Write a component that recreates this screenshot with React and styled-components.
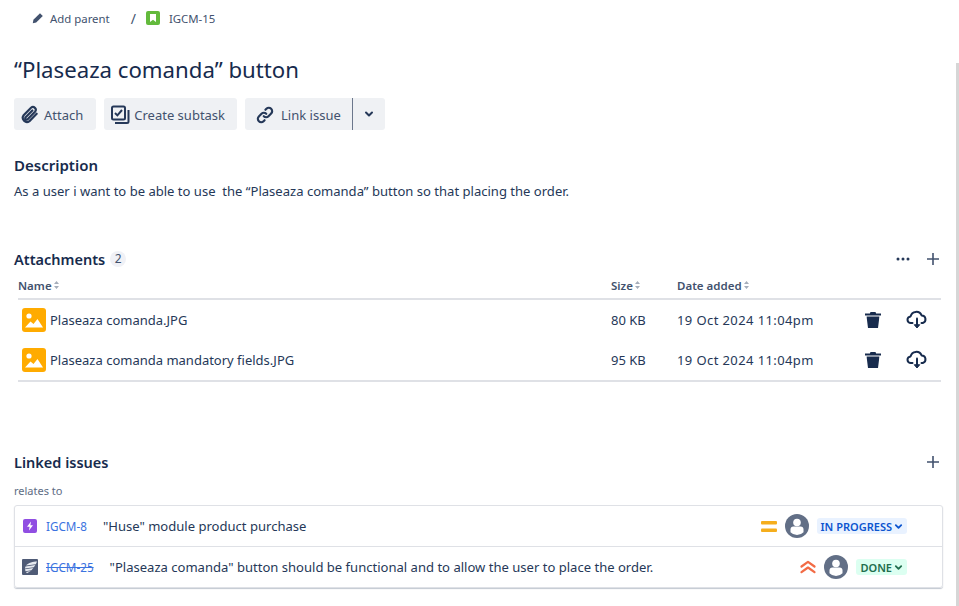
import React from 'react'
import styled, {createGlobalStyle} from 'styled-components'

const Global = createGlobalStyle`
  html, body { margin: 0; padding: 0; background: #fff; }
  body {
    font-family: "Noto Sans", "Open Sans", sans-serif;
    color: #253858;
    font-size: 13px;
  }
`

const PaperclipIcon = () => (
  <svg width="20" height="20" viewBox="0 0 24 24" fill="none" stroke="#253858" strokeWidth="2.600" strokeLinecap="round">
    <path d="M20 10.500l-8.600 8.800a5 5 0 0 1-7-7l8.800-9a3.400 3.400 0 0 1 4.800 4.800l-8.800 9a1.700 1.700 0 0 1-2.400-2.400l8-8.200" />
  </svg>
)

const SubtaskIcon = () => (
  <svg width="20" height="20" viewBox="0 0 20 20" fill="none" stroke="#253858" strokeWidth="2">
    <rect x="2" y="1.500" width="13" height="13" rx="1.500" />
    <path d="M5 8l2.400 2.400L12 5" />
    <path d="M18.500 5v11.500a1.500 1.500 0 0 1-1.500 1.500H5" />
  </svg>
)

const LinkIcon = () => (
  <svg width="20" height="20" viewBox="0 0 24 24" fill="none" stroke="#253858" strokeWidth="2.600" strokeLinecap="round">
    <path d="M10.500 13.500a4 4 0 0 0 5.700 0l3.200-3.200a4 4 0 0 0-5.700-5.700l-1.200 1.200" />
    <path d="M13.500 10.500a4 4 0 0 0-5.700 0l-3.200 3.200a4 4 0 0 0 5.700 5.700l1.200-1.200" />
  </svg>
)

const Chevron = ({color = '#253858', size = 10}) => (
  <svg width={size} height={size} viewBox="0 0 10 10" fill="none" stroke={color} strokeWidth="2" strokeLinecap="round" strokeLinejoin="round">
    <path d="M2 3.500l3 3 3-3" />
  </svg>
)

const PencilIcon = () => (
  <svg width="12" height="12" viewBox="0 0 12 12" fill="#42526e">
    <path d="M8 1.200l2.800 2.800-6.600 6.600L.8 11.200l.6-3.400z" />
  </svg>
)

const StoryIcon = () => (
  <svg width="14" height="14" viewBox="0 0 14 14">
    <rect width="14" height="14" rx="2" fill="#63ba3c" />
    <path d="M4 3h6v8L7 8.800 4 11z" fill="#fff" />
  </svg>
)

const SortIcon = () => (
  <svg width="5" height="8" viewBox="0 0 5 8" fill="#a5adba">
    <path d="M2.500 0L5 3H0zM2.500 8L0 5h5z" />
  </svg>
)

const ImageIcon = () => (
  <svg width="24" height="24" viewBox="0 0 24 24">
    <rect width="24" height="24" rx="3" fill="#ffab00" />
    <circle cx="7" cy="8" r="2.600" fill="#fff" />
    <path d="M3 19.500l5.500-6 3 2.500 4-5 5.500 8.500z" fill="#fff" />
  </svg>
)

const TrashIcon = () => (
  <svg width="16" height="16" viewBox="0 0 16 16" fill="#172b4d">
    <path d="M5.500 0h5l.6 1.400H16v2H0v-2h4.900z" />
    <path d="M1.600 4.500h12.800L13 16H3z" />
  </svg>
)

const CloudIcon = () => (
  <svg width="22" height="22" viewBox="0 0 22 22" fill="none" stroke="#172b4d" strokeWidth="2" strokeLinecap="round" strokeLinejoin="round">
    <path d="M6.500 14H5a3.300 3.300 0 0 1-.4-6.600 5.800 5.800 0 0 1 11-1 3.900 3.900 0 0 1 1.200 7.600H15.500" />
    <path d="M11 9.500v7" />
    <path d="M8.500 16l2.500 3 2.500-3z" fill="#172b4d" strokeWidth="1" />
  </svg>
)

const DotsIcon = () => (
  <svg width="14" height="4" viewBox="0 0 14 4" fill="#253858">
    <circle cx="2" cy="2" r="1.500" />
    <circle cx="7" cy="2" r="1.500" />
    <circle cx="12" cy="2" r="1.500" />
  </svg>
)

const PlusIcon = () => (
  <svg width="12" height="12" viewBox="0 0 12 12" stroke="#42526e" strokeWidth="1.600">
    <path d="M6 0v12M0 6h12" />
  </svg>
)

const EpicIcon = () => (
  <svg width="14" height="14" viewBox="0 0 14 14">
    <rect width="14" height="14" rx="2" fill="#904ee2" />
    <path d="M8 2.500L4 7.800h2.600L6 11.500l4-5.300H7.400z" fill="#fff" />
  </svg>
)

const WingIcon = () => (
  <svg width="16" height="16" viewBox="0 0 16 16">
    <rect width="16" height="16" rx="1" fill="#4f5b76" />
    <g fill="#e6e9ef">
      <path d="M15 2.500C11 2.700 6.500 3.500 4 6.500l9.800-1.300z" />
      <path d="M13.300 6L3.500 7.400 2.800 9.400 11.800 8.200z" />
      <path d="M11.300 9L3 10.200 3.500 12.300 9.400 11.300z" />
      <path d="M8.700 12L4 12.900 5 14.200z" />
    </g>
  </svg>
)

const MediumIcon = () => (
  <svg width="16" height="11" viewBox="0 0 16 11" fill="#f5ae1d">
    <rect width="16" height="3.500" rx="1" />
    <rect y="7.500" width="16" height="3.500" rx="1" />
  </svg>
)

const HighestIcon = () => (
  <svg width="16" height="14" viewBox="0 0 16 14" fill="none" stroke="#f26b45" strokeWidth="2.200" strokeLinecap="round" strokeLinejoin="round">
    <path d="M1.500 6.500L8 1.800l6.500 4.700" />
    <path d="M1.500 12.200L8 7.500l6.500 4.700" />
  </svg>
)

const AvatarIcon = () => (
  <svg width="24" height="24" viewBox="0 0 24 24">
    <circle cx="12" cy="12" r="12" fill="#626f86" />
    <circle cx="12" cy="8.500" r="3.800" fill="#fff" />
    <path d="M5.500 15.500a3 3 0 0 1 3-3h7a3 3 0 0 1 3 3v2.800a9 9 0 0 1-13 0z" fill="#fff" />
  </svg>
)

const attachments = [
  {name: 'Plaseaza comanda.JPG', size: '80 KB', date: '19 Oct 2024 11:04pm'},
  {name: 'Plaseaza comanda mandatory fields.JPG', size: '95 KB', date: '19 Oct 2024 11:04pm'},
]

const App = () => {
  return (
    <Page>
      <Global />
      <ScrollThumb />
      <Breadcrumbs>
        <ParentLink><PencilIcon />Add parent</ParentLink>
        <Slash>/</Slash>
        <StoryIcon />
        <IssueKey>IGCM-15</IssueKey>
      </Breadcrumbs>

      <Title>“Plaseaza comanda” button</Title>

      <Actions>
        <ActionButton $right={13}><PaperclipIcon />Attach</ActionButton>
        <ActionButton><SubtaskIcon />Create subtask</ActionButton>
        <SplitGroup>
          <SplitMain><LinkIcon />Link issue</SplitMain>
          <SplitArrow><Chevron /></SplitArrow>
        </SplitGroup>
      </Actions>

      <Heading>Description</Heading>
      <Paragraph>As a user i want to be able to use&nbsp; the “Plaseaza comanda” button so that placing the order.</Paragraph>

      <AttachmentsHeader>
        <HeadingRow>
          <SectionTitle>Attachments</SectionTitle>
          <Count>2</Count>
        </HeadingRow>
        <HeaderTools><DotsIcon /><PlusIcon /></HeaderTools>
      </AttachmentsHeader>

      <Table>
        <TableHead>
          <HeadCell>Name <SortIcon /></HeadCell>
          <HeadCell>Size <SortIcon /></HeadCell>
          <HeadCell>Date added <SortIcon /></HeadCell>
        </TableHead>
        {attachments.map((file) => (
          <TableRow key={file.name}>
            <NameCell><ImageIcon />{file.name}</NameCell>
            <div>{file.size}</div>
            <DateCell>{file.date}</DateCell>
            <IconCell><TrashIcon /></IconCell>
            <IconCell><CloudIcon /></IconCell>
          </TableRow>
        ))}
      </Table>

      <LinkedHeader>
        <SectionTitle>Linked issues</SectionTitle>
        <PlusIcon />
      </LinkedHeader>
      <RelatesTo>relates to</RelatesTo>

      <LinkedCard>
        <LinkedRow>
          <EpicIcon />
          <IssueLink $gap={9}>IGCM-8</IssueLink>
          <Summary>"Huse" module product purchase</Summary>
          <RowEnd>
            <MediumIcon />
            <AvatarIcon />
            <Status $bg="#e9f2ff" $color="#0c55cf">IN PROGRESS <Chevron color="#0c55cf" size={9} /></Status>
          </RowEnd>
        </LinkedRow>
        <LinkedRow $inset={7}>
          <WingIcon />
          <IssueLink $gap={8} $done>IGCM-25</IssueLink>
          <Summary>"Plaseaza comanda" button should be functional and to allow the user to place the order.</Summary>
          <RowEnd>
            <HighestIcon />
            <AvatarIcon />
            <Status $bg="#dcfff1" $color="#216e4e">DONE <Chevron color="#216e4e" size={9} /></Status>
          </RowEnd>
        </LinkedRow>
      </LinkedCard>
    </Page>
  )
}

export default App

const Page = styled.div`
  position: relative;
  width: 959px;
  height: 606px;
  box-sizing: border-box;
  padding: 0 18px 0 14px;
  overflow: hidden;
`

const ScrollThumb = styled.div`
  position: absolute;
  top: 63px;
  right: 0;
  bottom: 0;
  width: 3px;
  background: #d6d6d6;
`

const Breadcrumbs = styled.div`
  display: flex;
  align-items: center;
  height: 20px;
  margin-top: 8px;
  padding-left: 18px;
  font-size: 11.400px;
  color: #42526e;
`

const ParentLink = styled.span`
  display: flex;
  align-items: center;
  gap: 6px;
`

const Slash = styled.span`
  margin: 0 10px 0 21px;
  font-size: 14px;
`

const IssueKey = styled.span`
  margin-left: 9px;
`

const Title = styled.h1`
  margin: 24px 0 0;
  font-size: 22.200px;
  line-height: 36px;
  font-weight: 400;
  color: #172b4d;
`

const Actions = styled.div`
  display: flex;
  gap: 8px;
  margin-top: 10px;
`

const ActionButton = styled.button`
  display: flex;
  align-items: center;
  gap: 4px;
  height: 32px;
  padding: 1px ${(p) => p.$right ?? 12}px 0 6px;
  border: none;
  border-radius: 3px;
  background: #eff1f4;
  color: #42526e;
  font: inherit;
`

const SplitGroup = styled.div`
  display: flex;
  height: 32px;
`

const SplitMain = styled(ActionButton)`
  gap: 6px;
  padding: 1px 11px 0 10px;
  border-radius: 3px 0 0 3px;
  border-right: 1px solid #6b778c;
`

const SplitArrow = styled(ActionButton)`
  padding: 0 11px;
  border-radius: 0 3px 3px 0;
`

const Heading = styled.h2`
  margin: 25px 0 0;
  font-size: 15px;
  line-height: 20px;
  font-weight: 600;
  color: #172b4d;
`

const Paragraph = styled.p`
  margin: 6px 0 0;
  font-size: 13.050px;
  line-height: 20px;
`

const AttachmentsHeader = styled.div`
  display: flex;
  align-items: center;
  justify-content: space-between;
  margin-top: 46px;
  height: 24px;
  padding-right: 2px;
`

const HeadingRow = styled.div`
  display: flex;
  align-items: center;
  gap: 5px;
`

const SectionTitle = styled.h3`
  margin: 0;
  font-size: 14.500px;
  line-height: 20px;
  font-weight: 600;
  color: #172b4d;
`

const Count = styled.span`
  min-width: 16px;
  padding: 0 1px;
  box-sizing: border-box;
  border-radius: 8px;
  background: #f0f1f6;
  font-size: 12px;
  line-height: 16px;
  text-align: center;
  color: #42526e;
`

const HeaderTools = styled.div`
  display: flex;
  align-items: center;
  gap: 17px;
`

const Table = styled.div`
  margin: 5px 0 0 4px;
  border-bottom: 2px solid #dfe1e6;
`

const rowColumns = `
  display: grid;
  grid-template-columns: 593px 66px 188px 41px 1fr;
  align-items: center;
`

const TableHead = styled.div`
  ${rowColumns}
  height: 24px;
  box-sizing: border-box;
  padding-bottom: 4px;
  border-bottom: 2px solid #dfe1e6;
`

const HeadCell = styled.div`
  display: flex;
  align-items: center;
  gap: 2px;
  font-size: 11.500px;
  font-weight: 600;
  color: #42526e;
  white-space: nowrap;
`

const TableRow = styled.div`
  ${rowColumns}
  height: 40px;
  font-size: 13px;
`

const NameCell = styled.div`
  display: flex;
  align-items: center;
  gap: 4px;
  padding-left: 4px;
`

const DateCell = styled.div`
  letter-spacing: 0.4px;
`

const IconCell = styled.div`
  display: flex;
  align-items: center;
`

const LinkedHeader = styled.div`
  display: flex;
  align-items: center;
  justify-content: space-between;
  margin-top: 69px;
  padding-right: 2px;
  height: 22px;
`

const RelatesTo = styled.div`
  margin-top: 10px;
  font-size: 11px;
  line-height: 16px;
  color: #5e6c84;
`

const LinkedCard = styled.div`
  margin: 6px 0 0;
  width: 929px;
  box-sizing: border-box;
  border: 1px solid #dfe1e6;
  border-radius: 3px;
  box-shadow: 0 1px 1px rgba(9, 30, 66, 0.25);
`

const LinkedRow = styled.div`
  display: flex;
  align-items: center;
  height: 40px;
  padding-left: ${(p) => p.$inset ?? 8}px;
  & + & {
    border-top: 1px solid #dfe1e6;
  }
`

const IssueLink = styled.span`
  margin-left: ${(p) => p.$gap}px;
  font-size: 11.700px;
  color: #3b73e0;
  text-decoration: ${(p) => (p.$done ? 'line-through' : 'none')};
`

const Summary = styled.span`
  margin-left: 16px;
  font-size: 13.050px;
`

const RowEnd = styled.div`
  display: flex;
  align-items: center;
  gap: 8px;
  margin-left: auto;
  padding-right: 35px;
`

const Status = styled.span`
  display: flex;
  align-items: center;
  gap: 2px;
  height: 16px;
  padding: 0 4px;
  border-radius: 3px;
  background: ${(p) => p.$bg};
  color: ${(p) => p.$color};
  font-size: 11px;
  font-weight: 600;
`
